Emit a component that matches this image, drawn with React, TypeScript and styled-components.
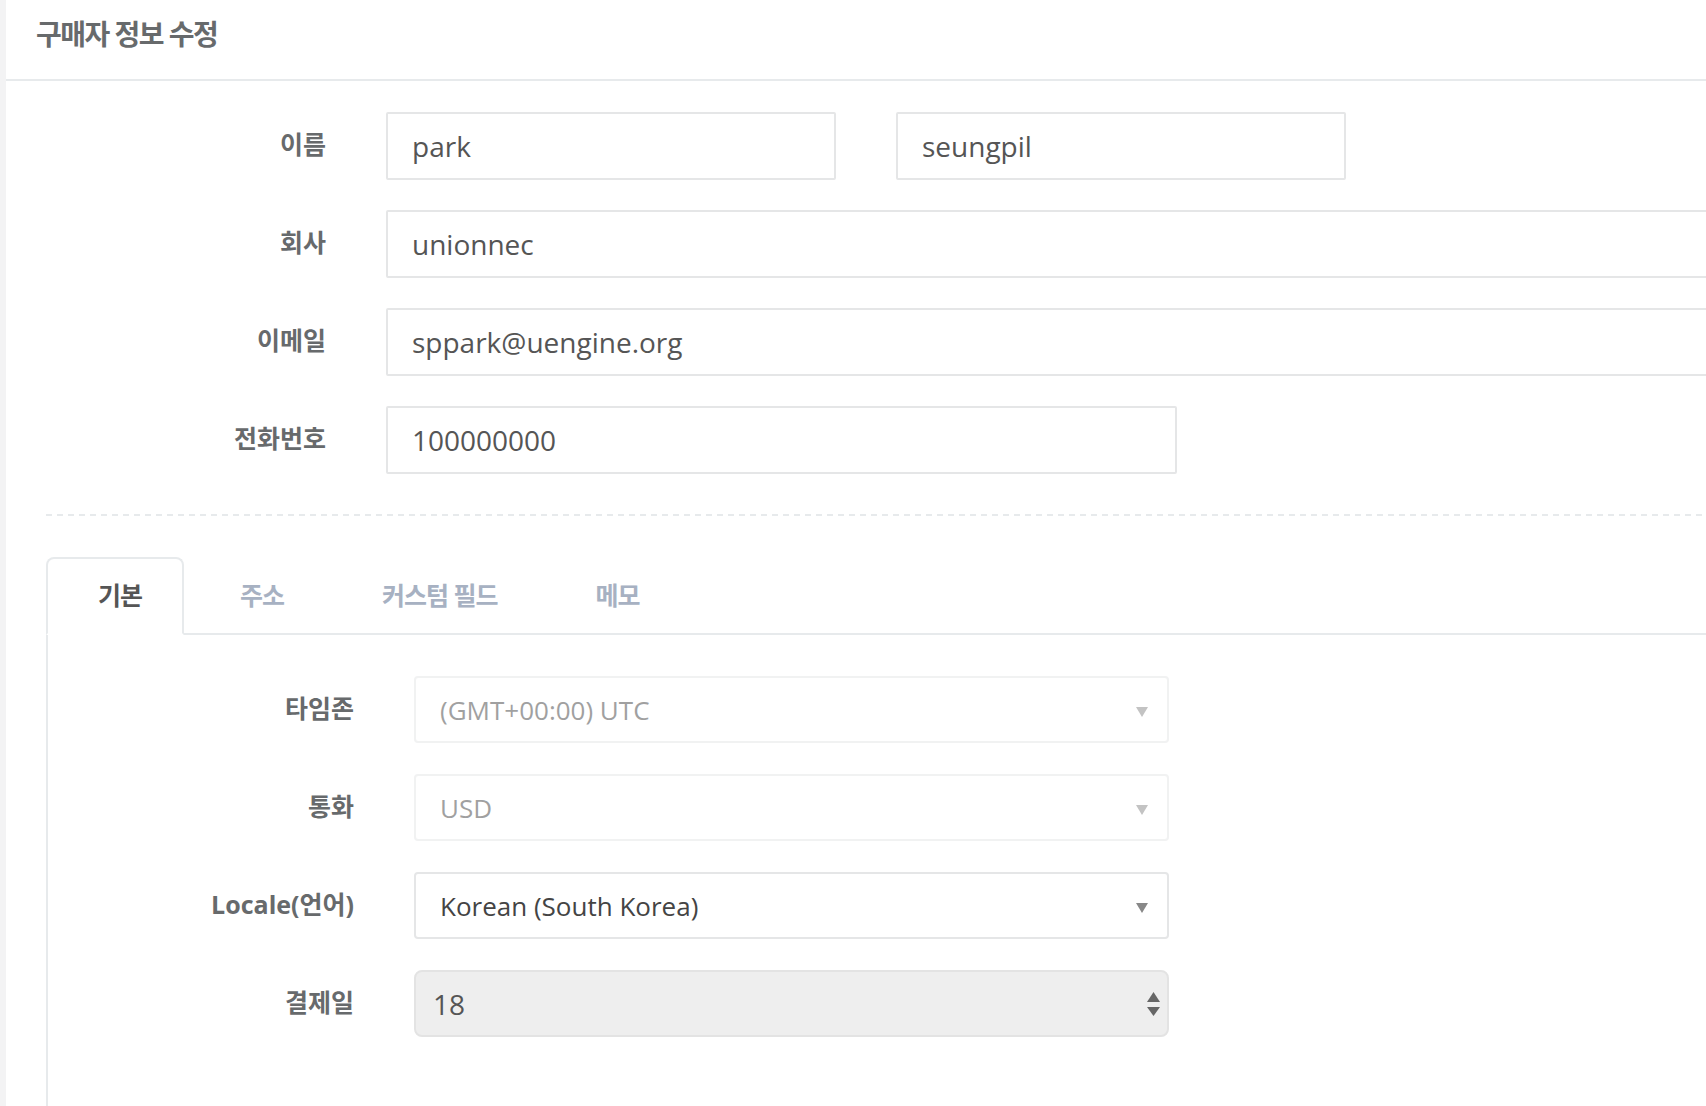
import React from "react";
import styled, { createGlobalStyle } from "styled-components";

const GlobalStyle = createGlobalStyle`
  *, *::before, *::after { box-sizing: border-box; }
  html, body { margin: 0; padding: 0; background: #fff; overflow: hidden; }
  body {
    font-family: "Open Sans", "Noto Sans CJK KR", sans-serif;
    color: #676a6c;
  }
`;

const Page = styled.div`
  display: flex;
  width: 100vw;
  height: 100vh;
  overflow: hidden;
`;

const SideStrip = styled.div`
  flex: 0 0 6px;
  background: #f3f3f4;
`;

const Main = styled.main`
  flex: 1;
  min-width: 0;
  overflow: hidden;
  background: #fff;
`;

const Header = styled.header`
  height: 81px;
  padding: 18px 30px 0;
  border-bottom: 2px solid #e7eaec;
`;

const Title = styled.h5`
  margin: 0;
  font-size: 28px;
  line-height: 32px;
  font-weight: 700;
  letter-spacing: -1.5px;
  color: #676a6c;
`;

const Content = styled.section`
  padding-top: 31px;
`;

const FormRow = styled.div<{ $labelWidth: number; $gap: number }>`
  display: grid;
  grid-template-columns: ${(p) => p.$labelWidth}px 1fr;
  margin-bottom: ${(p) => p.$gap}px;
`;

const Label = styled.label`
  padding: 14px 30px 0 0;
  text-align: right;
  font-size: 25px;
  line-height: 37px;
  font-weight: 700;
  color: #676a6c;
  white-space: nowrap;
`;

const Field = styled.div`
  display: flex;
  gap: 60px;
  padding-left: 30px;
  min-width: 0;
`;

const TextInput = styled.input<{ $width: string }>`
  flex: none;
  width: ${(p) => p.$width};
  height: 68px;
  padding: 0 24px;
  border: 2px solid #e5e6e7;
  border-radius: 2px;
  background: #fff;
  font-family: inherit;
  font-size: 28px;
  color: #555;
  outline: none;
`;

const DashedDivider = styled.div`
  height: 2px;
  margin: 40px -80px 41px 40px;
  background-image: repeating-linear-gradient(
    to right,
    #e7eaec 0 6px,
    transparent 6px 11px
  );
`;

const Tabs = styled.div`
  margin: 0 -80px 0 40px;
`;

const TabList = styled.ul`
  display: flex;
  margin: 0;
  padding: 0;
  list-style: none;
  border-bottom: 2px solid #e7eaec;
`;

const TabItem = styled.li`
  margin: 0 4px -2px 0;
`;

const TabLink = styled.button<{ $active?: boolean }>`
  display: block;
  padding: 18px 40px 19px 50px;
  border: 2px solid transparent;
  border-radius: 8px 8px 0 0;
  background: ${(p) => (p.$active ? "#fff" : "transparent")};
  border-color: ${(p) =>
    p.$active ? "#e7eaec #e7eaec #fff #e7eaec" : "transparent"};
  font-family: inherit;
  font-size: 25px;
  letter-spacing: -1px;
  line-height: 37px;
  font-weight: 700;
  color: ${(p) => (p.$active ? "#555" : "#a7b1c2")};
  cursor: pointer;
`;

const TabPanel = styled.div`
  min-height: 520px;
  padding-top: 41px;
  border-left: 2px solid #e7eaec;
  border-right: 2px solid #e7eaec;
  background: #fff;
`;

const SelectBox = styled.div<{ $disabled?: boolean }>`
  display: flex;
  align-items: center;
  justify-content: space-between;
  width: 755px;
  height: 67px;
  padding: 0 19px 0 24px;
  border: 2px solid #e5e6e7;
  border-radius: 4px;
  background: #fff;
  font-size: 26px;
  color: #444;
  opacity: ${(p) => (p.$disabled ? 0.5 : 1)};
`;

const SelectArrow = styled.svg`
  flex: none;
  margin-top: 5px;
  color: #888;
`;

const NumberBox = styled.div`
  display: flex;
  align-items: center;
  width: 755px;
  height: 67px;
  padding: 0 7px 0 17px;
  border: 2px solid #e3e3e3;
  border-radius: 8px;
  background: #eee;
`;

const NumberInput = styled.input`
  flex: 1;
  min-width: 0;
  padding: 0;
  border: 0;
  background: transparent;
  font-family: inherit;
  font-size: 28px;
  color: #555;
  -webkit-text-fill-color: #555;
  opacity: 1;
  outline: none;
`;

const Spinner = styled.svg`
  flex: none;
  color: #666;
`;

const Arrow = () => (
  <SelectArrow width="12" height="10" viewBox="0 0 12 10" aria-hidden="true">
    <path d="M0 0H12L6 10Z" fill="currentColor" />
  </SelectArrow>
);

const tabs = ["기본", "주소", "커스텀 필드", "메모"];

export default function App() {
  return (
    <>
      <GlobalStyle />
      <Page>
        <SideStrip />
        <Main>
          <Header>
            <Title>구매자 정보 수정</Title>
          </Header>
          <Content>
            <FormRow $labelWidth={350} $gap={30}>
              <Label>이름</Label>
              <Field>
                <TextInput $width="450px" defaultValue="park" />
                <TextInput $width="450px" defaultValue="seungpil" />
              </Field>
            </FormRow>
            <FormRow $labelWidth={350} $gap={30}>
              <Label>회사</Label>
              <Field>
                <TextInput $width="calc(100% + 60px)" defaultValue="unionnec" />
              </Field>
            </FormRow>
            <FormRow $labelWidth={350} $gap={30}>
              <Label>이메일</Label>
              <Field>
                <TextInput
                  $width="calc(100% + 60px)"
                  defaultValue="sppark@uengine.org"
                />
              </Field>
            </FormRow>
            <FormRow $labelWidth={350} $gap={30}>
              <Label>전화번호</Label>
              <Field>
                <TextInput $width="791px" defaultValue="100000000" />
              </Field>
            </FormRow>

            <DashedDivider />

            <Tabs>
              <TabList>
                {tabs.map((t, i) => (
                  <TabItem key={t}>
                    <TabLink $active={i === 0}>{t}</TabLink>
                  </TabItem>
                ))}
              </TabList>
              <TabPanel>
                <FormRow $labelWidth={336} $gap={31}>
                  <Label>타임존</Label>
                  <Field>
                    <SelectBox $disabled>
                      <span>(GMT+00:00) UTC</span>
                      <Arrow />
                    </SelectBox>
                  </Field>
                </FormRow>
                <FormRow $labelWidth={336} $gap={31}>
                  <Label>통화</Label>
                  <Field>
                    <SelectBox $disabled>
                      <span>USD</span>
                      <Arrow />
                    </SelectBox>
                  </Field>
                </FormRow>
                <FormRow $labelWidth={336} $gap={31}>
                  <Label>Locale(언어)</Label>
                  <Field>
                    <SelectBox>
                      <span>Korean (South Korea)</span>
                      <Arrow />
                    </SelectBox>
                  </Field>
                </FormRow>
                <FormRow $labelWidth={336} $gap={31}>
                  <Label>결제일</Label>
                  <Field>
                    <NumberBox>
                      <NumberInput disabled defaultValue="18" />
                      <Spinner width="13" height="24" viewBox="0 0 13 24" aria-hidden="true">
                        <path d="M6.5 0L13 10H0Z" fill="currentColor" />
                        <path d="M0 15H13L6.5 24Z" fill="currentColor" />
                      </Spinner>
                    </NumberBox>
                  </Field>
                </FormRow>
              </TabPanel>
            </Tabs>
          </Content>
        </Main>
      </Page>
    </>
  );
}
